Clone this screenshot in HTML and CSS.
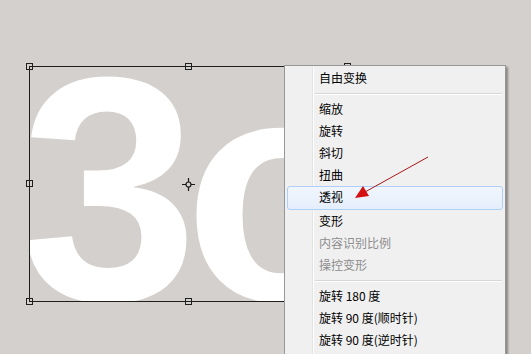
FILE: index.html
```html
<!DOCTYPE html>
<html lang="zh-CN">
<head>
    <meta charset="UTF-8">
    <meta name="viewport" content="width=device-width, initial-scale=1.0">
    <title>自由变换</title>
    <link rel="stylesheet" href="styles.css">
</head>
<body>
    <div class="stage">

        <div class="layer">
            <div class="layer-art"><span class="digits">3o</span></div>
        </div>

        <span class="handle h-tl"></span>
        <span class="handle h-tc"></span>
        <span class="handle h-tr"></span>
        <span class="handle h-ml"></span>
        <span class="handle h-bl"></span>
        <span class="handle h-bc"></span>

        <svg class="pivot" width="13" height="13" viewBox="0 0 13 13">
            <circle cx="6.5" cy="6.5" r="2.5" fill="none" stroke="#1a1a1a" stroke-width="1.2"/>
            <path d="M6.5 0v4M6.5 9v4M0 6.5h4M9 6.5h4" stroke="#1a1a1a" stroke-width="1.2"/>
        </svg>

        <div class="menu">
            <div class="menu-item">自由变换</div>
            <div class="separator"></div>
            <div class="menu-item">缩放</div>
            <div class="menu-item">旋转</div>
            <div class="menu-item">斜切</div>
            <div class="menu-item">扭曲</div>
            <div class="menu-item active">透视</div>
            <div class="menu-item">变形</div>
            <div class="menu-item disabled">内容识别比例</div>
            <div class="menu-item disabled">操控变形</div>
            <div class="separator"></div>
            <div class="menu-item">旋转 180 度</div>
            <div class="menu-item">旋转 90 度(顺时针)</div>
            <div class="menu-item">旋转 90 度(逆时针)</div>
            <div class="separator"></div>
        </div>

        <svg class="arrow" width="531" height="354" viewBox="0 0 531 354">
            <line x1="428" y1="157" x2="365" y2="192" stroke="#a81818" stroke-width="1"/>
            <polygon points="355,198 363,186 369,196" fill="#d41010"/>
        </svg>
    </div>
</body>
</html>
```

FILE: styles.css
```css
body {
    margin: 0;
    background-color: #d4d0cd;
    font-family: "Noto Sans CJK SC", "Liberation Sans", sans-serif;
    overflow: hidden;
}

.stage {
    position: relative;
    width: 531px;
    height: 354px;
}

/* layer bounds: 29..347 x 66..301 */
.layer {
    position: absolute;
    left: 29px;
    top: 66px;
    width: 317px;
    height: 234px;
    border: 1px solid #1e1e1e;
}

/* right part sits under the menu anyway */
.layer-art {
    width: 254px;
    height: 100%;
    overflow: hidden;
}

.digits {
    display: block;
    margin: -38px 0 0 -10px;
    font-family: "Liberation Sans", Arial, sans-serif;
    font-weight: bold;
    font-size: 320px;
    line-height: 1;
    letter-spacing: -14px;
    color: #fff;
    white-space: nowrap;
}

.handle {
    position: absolute;
    width: 5px;
    height: 5px;
    border: 1px solid #1e1e1e;
    background: transparent;
}

.h-tl { left: 26px; top: 63px; }
.h-tc { left: 185px; top: 63px; }
.h-tr { left: 344px; top: 63px; }
.h-ml { left: 26px; top: 180px; }
.h-bl { left: 26px; top: 298px; }
.h-bc { left: 185px; top: 298px; }

.pivot {
    position: absolute;
    left: 182px;
    top: 178px;
}

.menu {
    position: absolute;
    left: 284px;
    top: 65px;
    width: 218px;
    height: 300px;
    padding: 1px;
    border: 1px solid #979797;
    background: #f0f0f0 linear-gradient(to right, transparent 27px, #e2e3e3 27px, #e2e3e3 28px, #fff 28px, #fff 29px, transparent 29px);
    box-shadow: 2px 2px 2px rgba(0, 0, 0, 0.35);
}

.menu-item {
    height: 22px;
    line-height: 22px;
    padding-left: 31px;
    margin: 0 1px;
    font-size: 12px;
    color: #000;
    border: 1px solid transparent;
    border-width: 0 1px;
    border-radius: 3px;
}

.menu-item.active {
    background: linear-gradient(#f1f6fd, #e4eefb);
    border: 1px solid #aecff7;
    line-height: 20px;
}

.menu-item.disabled {
    color: #8d8d8d;
}

.separator {
    height: 1px;
    margin: 4px 2px 3px 29px;
    background: #d7d7d7;
    border-bottom: 1px solid #fff;
}

.arrow {
    position: absolute;
    left: 0;
    top: 0;
    pointer-events: none;
}
```
